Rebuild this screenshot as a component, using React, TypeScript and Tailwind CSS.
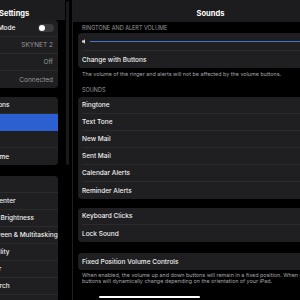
import React from "react";

const font = "font-['Inter','Liberation_Sans',sans-serif]";

function LRow({ label, value, toggle, selected, last }: { label?: string; value?: string; toggle?: boolean; selected?: boolean; last?: boolean }) {
  return (
    <div className={`h-[17px] flex items-center pl-[45px] ${selected ? "bg-[#2c5fd1]" : ""}`}>
      <div className={`flex-1 h-full flex items-center justify-between pr-[5px] ${!last && !selected ? "border-b border-[#2b2b2d]" : ""}`}>
        <span className="text-[6.5px] leading-[8px] font-medium text-[#f0f0f0] whitespace-nowrap">{label}</span>
        {value && <span className="text-[6.5px] leading-[8px] font-normal text-[#98989d] whitespace-nowrap">{value}</span>}
        {toggle && (
          <div className="w-[16px] h-[8px] rounded-full bg-[#3a3a3c] flex items-center p-[1px] mr-[-1px]">
            <div className="w-[6px] h-[6px] rounded-full bg-white" />
          </div>
        )}
      </div>
    </div>
  );
}

function RRow({ label, last }: { label: string; last?: boolean }) {
  return (
    <div className="h-[17px] flex items-center pl-[4px]">
      <div className={`flex-1 h-full flex items-center ${!last ? "border-b border-[#2b2b2d]" : ""}`}>
        <span className="text-[6.5px] leading-[8px] font-medium text-[#f0f0f0] whitespace-nowrap">{label}</span>
      </div>
    </div>
  );
}

export default function App() {
  return (
    <div className={`relative w-[300px] h-[300px] overflow-hidden bg-black flex ${font}`}>
      {/* Sidebar */}
      <div className="relative w-[72px] shrink-0 overflow-hidden">
        <div className="w-[140px] ml-[-75px] flex flex-col">
          <div className="h-[20px] bg-[#1c1c1e] flex items-end pb-[2px] pl-[74px]">
            <span className="text-[7.5px] leading-[8px] font-bold text-white whitespace-nowrap">Settings</span>
          </div>
          <div className="rounded-[4px] bg-[#1f1f21] overflow-hidden mr-[7px]">
            <LRow label="Airplane Mode" toggle />
            <LRow label="Wi-Fi" value="SKYNET 2" />
            <LRow label="Bluetooth" value="Off" />
            <LRow label="VPN" value="Connected" last />
          </div>
          <div className="rounded-[4px] bg-[#1f1f21] overflow-hidden mr-[7px] mt-[9px]">
            <LRow label="Notifications" />
            <LRow label="Sounds" selected />
            <LRow label="Focus" />
            <LRow label="Screen Time" last />
          </div>
          <div className="rounded-[4px] bg-[#1f1f21] overflow-hidden mr-[7px] mt-[11px]">
            <LRow label="General" />
            <LRow label="Control Center" />
            <LRow label="Display & Brightness" />
            <LRow label="Home Screen & Multitasking" />
            <LRow label="Accessibility" />
            <LRow label="Wallpaper" />
            <LRow label="Siri & Search" />
            <LRow label="Apple Pencil" last />
          </div>
        </div>
        <div className="absolute left-[66px] top-[1px] w-[2.5px] h-[164px] rounded-full bg-[#1a1a1c]" />
      </div>

      {/* Detail */}
      <div className="w-[276px] shrink-0 border-l border-[#1e1e20] flex flex-col">
        <div className="h-[22px] bg-[#1c1c1e] flex items-end justify-center pb-[4px]">
          <span className="text-[7.5px] leading-[8px] font-bold text-white">Sounds</span>
        </div>
        <div className="px-[5px] flex flex-col">
          <div className="h-[11px] pt-[3px] pl-[4px] text-[5.5px] leading-[6px] text-[#98989d] whitespace-nowrap">RINGTONE AND ALERT VOLUME</div>
          <div className="rounded-[4px] bg-[#1f1f21]">
            <div className="h-[18px] flex items-center pl-[4px]">
              <div className="flex-1 h-full flex items-center border-b border-[#2b2b2d]">
                <svg width="4" height="5" viewBox="0 0 4 5" className="shrink-0">
                  <path d="M0 1.6 H1.3 L3 0.2 V4.8 L1.3 3.4 H0 Z" fill="#d8d8d8" />
                </svg>
                <div className="flex-1 h-[1.5px] ml-[4px] bg-[#4574cc]" />
              </div>
            </div>
            <RRow label="Change with Buttons" last />
          </div>
          <div className="mt-[3px] pl-[4px] text-[5.4px] leading-[6px] text-[#a4a4a9] whitespace-nowrap">
            The volume of the ringer and alerts will not be affected by the volume buttons.
          </div>
          <div className="mt-[10px] h-[10px] pl-[4px] text-[5.5px] leading-[6px] text-[#98989d]">SOUNDS</div>
          <div className="rounded-[4px] bg-[#1f1f21]">
            <RRow label="Ringtone" />
            <RRow label="Text Tone" />
            <RRow label="New Mail" />
            <RRow label="Sent Mail" />
            <RRow label="Calendar Alerts" />
            <RRow label="Reminder Alerts" last />
          </div>
          <div className="rounded-[4px] bg-[#1f1f21] mt-[9px]">
            <RRow label="Keyboard Clicks" />
            <RRow label="Lock Sound" last />
          </div>
          <div className="rounded-[4px] bg-[#1f1f21] mt-[11px]">
            <RRow label="Fixed Position Volume Controls" last />
          </div>
          <div className="mt-[2px] pl-[4px] text-[5.4px] leading-[6px] text-[#a4a4a9] whitespace-nowrap">
            <div>When enabled, the volume up and down buttons will remain in a fixed position. When disabled, the volume</div>
            <div>buttons will dynamically change depending on the orientation of your iPad.</div>
          </div>
        </div>
      </div>

      <div className="absolute left-[99px] top-[296px] w-[101px] h-[2px] rounded-full bg-white" />
    </div>
  );
}
